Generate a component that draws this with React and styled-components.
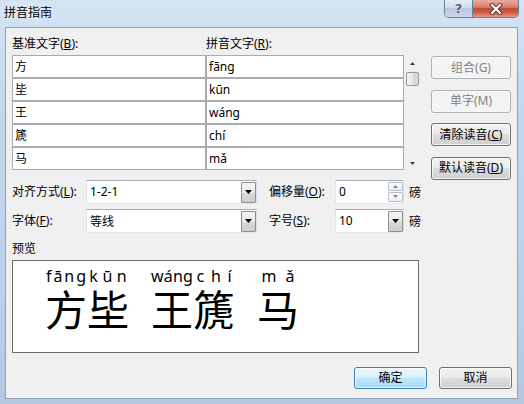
import React from "react";
import styled, { createGlobalStyle } from "styled-components";

const Global = createGlobalStyle`
  html, body { margin: 0; padding: 0; }
  body {
    width: 524px;
    height: 404px;
    overflow: hidden;
    font-family: "Noto Sans", "Noto Sans CJK SC", sans-serif;
    font-size: 12px;
    color: #000;
  }
`;

/* ---------- window chrome ---------- */

const Frame = styled.div`
  width: 524px;
  height: 404px;
  box-sizing: border-box;
  display: flex;
  flex-direction: column;
  padding-bottom: 5px;
  background: linear-gradient(180deg, #d5e4f4 0%, #c3d8ee 25%, #bdd2ea 70%, #b3c8e0 100%);
`;

const TitleBar = styled.div`
  height: 27px;
  flex: none;
  display: flex;
  align-items: flex-start;
  justify-content: space-between;
  padding: 0 5px 0 4px;
`;

const Title = styled.div`
  font-size: 12px;
  line-height: 16px;
  margin-top: 5px;
  color: #000;
  text-shadow: 0 0 6px rgba(255, 255, 255, 0.9);
`;

const CaptionGroup = styled.div`
  display: flex;
  height: 18px;
  border: 1px solid #6f7f93;
  border-top: none;
  border-radius: 0 0 5px 5px;
  overflow: hidden;
  box-sizing: border-box;
`;

const HelpButton = styled.div`
  width: 27px;
  display: flex;
  align-items: center;
  justify-content: center;
  border-right: 1px solid #6f7f93;
  background: linear-gradient(180deg, #e4edf6 0%, #cfdcea 45%, #b9c9dc 50%, #c8d7e7 100%);
  color: #50627a;
  font: bold 13px/1 "DejaVu Sans", sans-serif;
  text-shadow: 0 0 2px #fff;
`;

const CloseButton = styled.div`
  width: 45px;
  display: flex;
  align-items: center;
  justify-content: center;
  background: linear-gradient(180deg, #e9ab9e 0%, #d8806f 42%, #c54a36 50%, #cf5f48 75%, #e49a84 100%);
`;

const Client = styled.div`
  flex: 1;
  margin: 0 6px 0 5px;
  border: 1px solid #8ea2ba;
  background: #f0f0f0;
  display: flex;
  flex-direction: column;
  padding: 8px 5px 0 6px;
  box-sizing: border-box;
`;

/* ---------- top: list + side buttons ---------- */

const TopSection = styled.div`
  display: flex;
  align-items: flex-start;
`;

const ListArea = styled.div`
  width: 409px;
  display: flex;
  flex-direction: column;
`;

const HeaderRow = styled.div`
  height: 19px;
  display: grid;
  grid-template-columns: 194px 1fr;
  line-height: 16px;
`;

const Label = styled.span`
  white-space: nowrap;
  line-height: 16px;
`;

const Key = styled.span`
  text-decoration: underline;
  text-underline-offset: 1px;
`;

const ListBody = styled.div`
  display: flex;
`;

const Table = styled.div`
  width: 392px;
  box-sizing: border-box;
  display: grid;
  grid-template-columns: 192px 196px;
  grid-auto-rows: 21px;
  gap: 2px;
  padding: 1px;
  background: #ababab;
`;

const Cell = styled.div`
  background: #fff;
  padding-left: 2px;
  line-height: 21px;
  white-space: nowrap;
`;

const ScrollBar = styled.div`
  width: 17px;
  height: 115px;
  display: flex;
  flex-direction: column;
  align-items: center;
`;

const ArrowBox = styled.div`
  height: ${(p) => (p.$bottom ? 13 : 17)}px;
  width: 17px;
  display: flex;
  align-items: center;
  justify-content: center;
  margin-top: ${(p) => (p.$bottom ? "auto" : "0")};
`;

const Thumb = styled.div`
  width: 13px;
  height: 14px;
  box-sizing: border-box;
  border: 1px solid #979797;
  border-radius: 2px;
  background: linear-gradient(90deg, #f3f3f3 0%, #e8e8e8 50%, #d6d6d6 51%, #dcdcdc 100%);
`;

const ButtonCol = styled.div`
  margin-left: 10px;
  padding-top: 20px;
  display: flex;
  flex-direction: column;
  gap: 10.5px;
`;

const PushButton = styled.button`
  box-sizing: border-box;
  width: ${(p) => p.$w || 80}px;
  height: ${(p) => p.$h || 23}px;
  padding: 0;
  border-radius: 3px;
  font-family: inherit;
  font-size: 12px;
  line-height: 1;
  border: 1px solid ${(p) => (p.disabled ? "#adb2b5" : p.$primary ? "#3c7fb1" : "#707070")};
  color: ${(p) => (p.disabled ? "#838383" : "#000")};
  background: ${(p) =>
    p.disabled
      ? "#f4f4f4"
      : p.$primary
      ? "linear-gradient(180deg, #ebf6fd 0%, #dbf0fc 48%, #bfe6fd 50%, #a9daf6 100%)"
      : "linear-gradient(180deg, #f2f2f2 0%, #ebebeb 48%, #dddddd 50%, #cfcfcf 100%)"};
  box-shadow: inset 0 0 0 1px rgba(255, 255, 255, ${(p) => (p.disabled ? 0.4 : 0.75)});
`;

/* ---------- option rows ---------- */

const OptionGrid = styled.div`
  display: grid;
  grid-template-columns: 74px 183px 66px 74px auto;
  grid-auto-rows: 24px;
  row-gap: 5px;
  align-items: center;
`;

const Combo = styled.div`
  box-sizing: border-box;
  width: ${(p) => p.$w}px;
  height: 24px;
  border: 1px solid #abadb3;
  border-color: #abadb3 #dbdfe6 #e3e9ef #e2e3ea;
  background: #fff;
  display: flex;
  align-items: center;
  padding-left: 3px;
`;

const ComboText = styled.span`
  flex: 1;
  white-space: nowrap;
`;

const DropButton = styled.div`
  width: 15px;
  height: 21px;
  align-self: flex-end;
  box-sizing: border-box;
  border: 1px solid #8d8d8d;
  border-radius: 1px;
  background: linear-gradient(180deg, #f4f4f4 0%, #e9e9e9 50%, #d9d9d9 51%, #cfcfcf 100%);
  display: flex;
  align-items: center;
  justify-content: center;
`;

const SpinCol = styled.div`
  width: 15px;
  align-self: stretch;
  display: flex;
  flex-direction: column;
  padding: 1px 0;
  gap: 1px;
  box-sizing: border-box;
`;

const SpinButton = styled.div`
  flex: 1;
  box-sizing: border-box;
  border: 1px solid #b4bdc8;
  border-radius: 1px;
  background: linear-gradient(180deg, #fbfbfb 0%, #eef0f3 100%);
  display: flex;
  align-items: center;
  justify-content: center;
`;

const Unit = styled.span`
  white-space: nowrap;
`;

/* ---------- preview ---------- */

const PreviewLabel = styled.div`
  margin-top: 8px;
  line-height: 16px;
`;

const PreviewBox = styled.div`
  margin-top: 3px;
  width: 407px;
  height: 93px;
  box-sizing: border-box;
  border: 1px solid #6a6a6a;
  background: #fff;
  display: flex;
  align-items: flex-start;
  gap: 22px;
  padding: 6px 0 0 32px;
`;

const Group = styled.div`
  display: flex;
`;

const RubyCell = styled.div`
  display: flex;
  flex-direction: column;
  align-items: center;
  min-width: 42px;
`;

const RubyText = styled.div`
  align-self: stretch;
  display: flex;
  justify-content: space-around;
  font-family: "Noto Sans", sans-serif;
  font-size: 16px;
  line-height: 18px;
  height: 18px;
  white-space: nowrap;
`;

const Base = styled.div`
  font-family: "Noto Sans CJK SC", sans-serif;
  font-size: 42px;
  line-height: 42px;
  margin-top: 2px;
`;

/* ---------- footer ---------- */

const Footer = styled.div`
  margin-top: 14px;
  display: flex;
  justify-content: flex-end;
  gap: 12px;
`;

/* ---------- icons ---------- */

const Tri = ({ dir = "down", color = "#000", w = 7, h = 4 }) => (
  <svg width={w} height={h} viewBox={`0 0 ${w} ${h}`} style={{ display: "block" }}>
    {dir === "down" ? (
      <polygon points={`0,0 ${w},0 ${w / 2},${h}`} fill={color} />
    ) : (
      <polygon points={`0,${h} ${w},${h} ${w / 2},0`} fill={color} />
    )}
  </svg>
);

const CloseGlyph = () => (
  <svg width="14" height="12" viewBox="0 0 14 12">
    <g strokeLinecap="square">
      <path d="M3 2 L11 10 M11 2 L3 10" stroke="#5a2a22" strokeWidth="4" />
      <path d="M3 2 L11 10 M11 2 L3 10" stroke="#ffffff" strokeWidth="2.2" />
    </g>
  </svg>
);

/* ---------- data ---------- */

const rows = [
  ["方", "fāng"],
  ["坒", "kūn"],
  ["王", "wáng"],
  ["篪", "chí"],
  ["马", "mǎ"],
];

const groups = [
  [["方", "fāng"], ["坒", "kūn"]],
  [["王", "wáng"], ["篪", "chí"]],
  [["马", "mǎ"]],
];

// one base character with its reading spread evenly above it (1-2-1 alignment)
const Ruby = ({ base, text }) => (
  <RubyCell>
    <RubyText>
      {[...text].map((ch, i) => (
        <span key={i}>{ch}</span>
      ))}
    </RubyText>
    <Base>{base}</Base>
  </RubyCell>
);

export default function App() {
  return (
    <>
      <Global />
      <Frame>
        <TitleBar>
          <Title>拼音指南</Title>
          <CaptionGroup>
            <HelpButton>?</HelpButton>
            <CloseButton>
              <CloseGlyph />
            </CloseButton>
          </CaptionGroup>
        </TitleBar>

        <Client>
          <TopSection>
            <ListArea>
              <HeaderRow>
                <Label>
                  基准文字(<Key>B</Key>):
                </Label>
                <Label>
                  拼音文字(<Key>R</Key>):
                </Label>
              </HeaderRow>
              <ListBody>
                <Table>
                  {rows.map(([base, py]) => (
                    <React.Fragment key={base}>
                      <Cell>{base}</Cell>
                      <Cell>{py}</Cell>
                    </React.Fragment>
                  ))}
                </Table>
                <ScrollBar>
                  <ArrowBox>
                    <Tri dir="up" color="#3c3c3c" w={5} h={3} />
                  </ArrowBox>
                  <Thumb />
                  <ArrowBox $bottom>
                    <Tri dir="down" color="#3c3c3c" w={5} h={3} />
                  </ArrowBox>
                </ScrollBar>
              </ListBody>
            </ListArea>

            <ButtonCol>
              <PushButton disabled>组合(G)</PushButton>
              <PushButton disabled>单字(M)</PushButton>
              <PushButton>
                清除读音(<Key>C</Key>)
              </PushButton>
              <PushButton>
                默认读音(<Key>D</Key>)
              </PushButton>
            </ButtonCol>
          </TopSection>

          <OptionGrid>
            <Label>
              对齐方式(<Key>L</Key>):
            </Label>
            <Combo $w={171}>
              <ComboText>1-2-1</ComboText>
              <DropButton>
                <Tri />
              </DropButton>
            </Combo>
            <Label>
              偏移量(<Key>O</Key>):
            </Label>
            <Combo $w={69}>
              <ComboText>0</ComboText>
              <SpinCol>
                <SpinButton>
                  <Tri dir="up" color="#7d8794" w={5} h={3} />
                </SpinButton>
                <SpinButton>
                  <Tri dir="down" color="#7d8794" w={5} h={3} />
                </SpinButton>
              </SpinCol>
            </Combo>
            <Unit>磅</Unit>

            <Label>
              字体(<Key>F</Key>):
            </Label>
            <Combo $w={171}>
              <ComboText>等线</ComboText>
              <DropButton>
                <Tri />
              </DropButton>
            </Combo>
            <Label>
              字号(<Key>S</Key>):
            </Label>
            <Combo $w={69}>
              <ComboText>10</ComboText>
              <DropButton>
                <Tri />
              </DropButton>
            </Combo>
            <Unit>磅</Unit>
          </OptionGrid>

          <PreviewLabel>预览</PreviewLabel>
          <PreviewBox>
            {groups.map((g, gi) => (
              <Group key={gi}>
                {g.map(([base, py]) => (
                  <Ruby key={base} base={base} text={py} />
                ))}
              </Group>
            ))}
          </PreviewBox>

          <Footer>
            <PushButton $w={73} $h={22} $primary>
              确定
            </PushButton>
            <PushButton $w={73} $h={22}>
              取消
            </PushButton>
          </Footer>
        </Client>
      </Frame>
    </>
  );
}
